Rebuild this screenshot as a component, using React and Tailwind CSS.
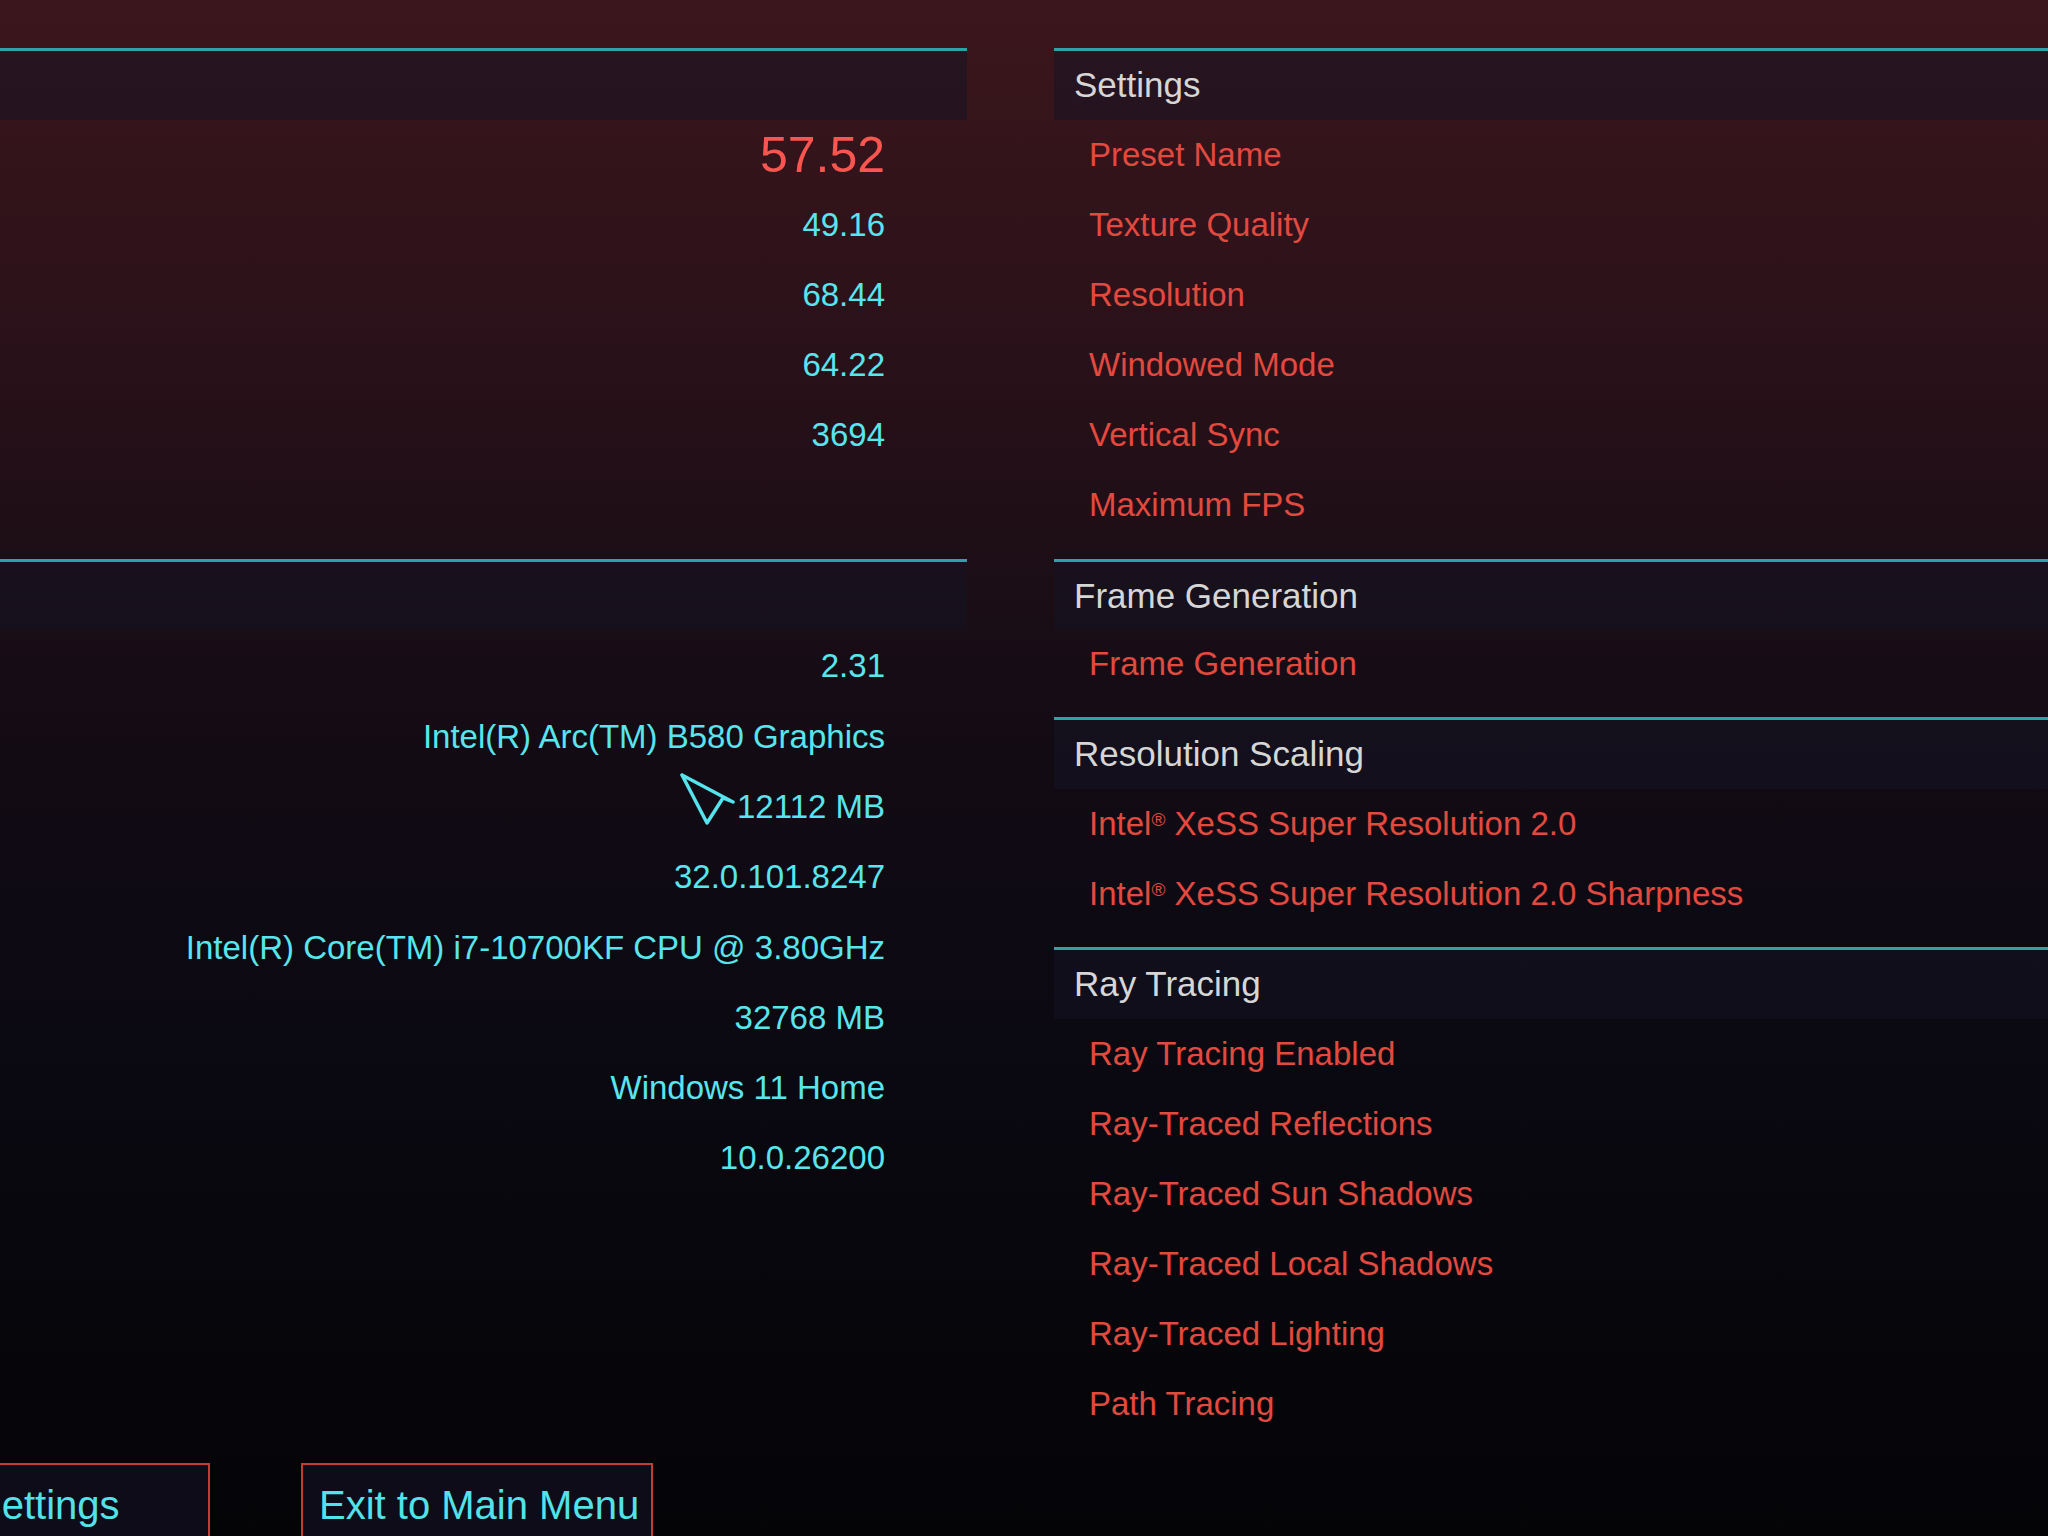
import React from 'react';

const perf = [
  { value: '57.52', big: true },
  { value: '49.16' },
  { value: '68.44' },
  { value: '64.22' },
  { value: '3694' },
];

const system = [
  '2.31',
  'Intel(R) Arc(TM) B580 Graphics',
  '12112 MB',
  '32.0.101.8247',
  'Intel(R) Core(TM) i7-10700KF CPU @ 3.80GHz',
  '32768 MB',
  'Windows 11 Home',
  '10.0.26200',
];

const groups = [
  {
    title: 'Settings',
    items: ['Preset Name', 'Texture Quality', 'Resolution', 'Windowed Mode', 'Vertical Sync', 'Maximum FPS'],
    pad: 'pb-[19px]',
  },
  { title: 'Frame Generation', items: ['Frame Generation'], pad: 'pb-[20px]', tight: true },
  {
    title: 'Resolution Scaling',
    items: ['Intel® XeSS Super Resolution 2.0', 'Intel® XeSS Super Resolution 2.0 Sharpness'],
    pad: 'pb-[18px]',
  },
  {
    title: 'Ray Tracing',
    items: [
      'Ray Tracing Enabled',
      'Ray-Traced Reflections',
      'Ray-Traced Sun Shadows',
      'Ray-Traced Local Shadows',
      'Ray-Traced Lighting',
      'Path Tracing',
    ],
    pad: '',
  },
];

function Band({ children }) {
  return (
    <div className="h-[72px] shrink-0 border-t-[3px] border-[#2ba3a9] bg-[#141424]/50 flex items-center pl-[20px] text-[35px] text-[#d6d6d6]">
      {children}
    </div>
  );
}

function Cursor() {
  return (
    <svg width="56" height="54" viewBox="694 771 56 54" className="mb-[16px] mr-[2px]">
      <path
        d="M697 774 L748 801 M697 774 L722 822 L738 797 L748 801"
        fill="none"
        stroke="#55e4ec"
        strokeWidth="3.5"
        strokeLinecap="round"
        strokeLinejoin="round"
      />
    </svg>
  );
}

function withReg(text) {
  if (!text.includes('®')) return text;
  const [a, b] = text.split('®');
  return (
    <>
      {a}
      <sup className="text-[19px]">®</sup>
      {b}
    </>
  );
}

export default function App() {
  return (
    <div className="w-[2048px] h-[1536px] overflow-hidden flex font-['Liberation_Sans',Arial,sans-serif] bg-[linear-gradient(to_bottom,#3b161c_0%,#2e121a_18%,#210f17_32%,#160c15_44%,#0e0a13_58%,#09080f_75%,#040407_100%)]">
      {/* left: benchmark results */}
      <div className="w-[967px] shrink-0 flex flex-col pt-[48px]">
        <section className="h-[511px] shrink-0">
          <Band />
          {perf.map((p) => (
            <div key={p.value} className="h-[70px] flex items-center justify-end pr-[82px]">
              <span className={p.big ? 'text-[50px] text-[#fb5550]' : 'text-[33px] text-[#58e5ed]'}>{p.value}</span>
            </div>
          ))}
        </section>

        <section className="shrink-0">
          <Band />
          {system.map((v) => (
            <div key={v} className="h-[70.3px] flex items-center justify-end pr-[82px] text-[33px] text-[#58e5ed]">
              {v === '12112 MB' && <Cursor />}
              <span>{v}</span>
            </div>
          ))}
        </section>

        <div className="mt-[270px] shrink-0 flex gap-[91px]">
          <div className="ml-[-45px] w-[255px] h-[90px] shrink-0 border-2 border-[#c63b31] bg-[#0d0c18] pl-[18px] pt-[10px] text-[40px] text-[#52e2ea] whitespace-nowrap">
            Settings
          </div>
          <div className="w-[352px] h-[90px] shrink-0 border-2 border-[#c63b31] bg-[#0d0c18] pl-[16px] pt-[10px] text-[40px] text-[#52e2ea] whitespace-nowrap">
            Exit to Main Menu
          </div>
        </div>
      </div>

      {/* right: settings list */}
      <div className="flex-1 ml-[87px] pt-[48px]">
        {groups.map((g) => (
          <section key={g.title} className={g.pad}>
            <Band>{g.title}</Band>
            {g.items.map((it) => (
              <div
                key={it}
                className={`${g.tight ? 'h-[66px]' : 'h-[70px]'} flex items-center pl-[35px] text-[33px] text-[#e2493f]`}
              >
                <span>{withReg(it)}</span>
              </div>
            ))}
          </section>
        ))}
      </div>
    </div>
  );
}
